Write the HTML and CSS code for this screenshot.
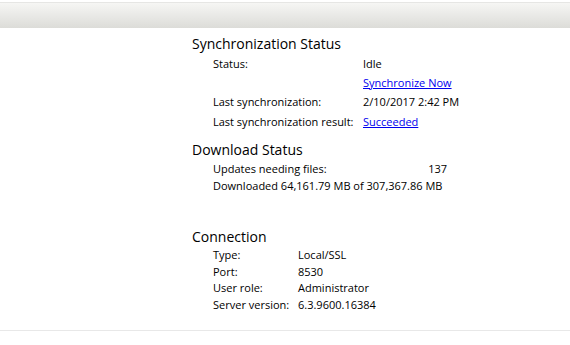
FILE: index.html
```html
<!DOCTYPE html>
<html lang="en">
<head>
    <meta charset="UTF-8">
    <title>Server Status</title>
    <link rel="stylesheet" href="styles.css">
</head>
<body>

    <div class="top-bar"></div>

    <div class="content">

        <div class="section">
            <div class="section-title">Synchronization Status</div>
            <div class="grid sync-grid">
                <span>Status:</span><span>Idle</span>
                <span></span><a href="#" class="link">Synchronize Now</a>
                <span>Last synchronization:</span><span>2/10/2017 2:42 PM</span>
                <span>Last synchronization result:</span><a href="#" class="link">Succeeded</a>
            </div>
        </div>

        <div class="section">
            <div class="section-title">Download Status</div>
            <div class="download">
                <div class="download-row"><span>Updates needing files:</span><span>137</span></div>
                <div>Downloaded 64,161.79 MB of 307,367.86 MB</div>
            </div>
        </div>

        <div class="section connection">
            <div class="section-title">Connection</div>
            <div class="grid conn-grid">
                <span>Type:</span><span>Local/SSL</span>
                <span>Port:</span><span>8530</span>
                <span>User role:</span><span>Administrator</span>
                <span>Server version:</span><span>6.3.9600.16384</span>
            </div>
        </div>

    </div>

    <div class="bottom-line"></div>

</body>
</html>
```

FILE: styles.css
```css
body {
    margin: 0;
    background-color: #ffffff;
    font-family: "Open Sans", "Noto Sans", sans-serif;
    font-size: 11px;
    color: #000000;
}

.top-bar {
    margin-top: 2px;
    height: 25px;
    border-top: 1px solid #e6e6e4;
    background: linear-gradient(to bottom, #f6f6f4, #dcdcd8);
}

.content {
    padding: 6px 0 0 192px;
    height: 299px;
    box-sizing: border-box;
}

.section {
    margin-bottom: 7px;
}

.connection {
    margin-top: 33px;
}

.section-title {
    font-size: 14px;
    line-height: 20px;
}

.grid {
    display: grid;
    padding-left: 21px;
}

.sync-grid {
    margin-top: 1.5px;
    grid-template-columns: 150px auto;
    grid-auto-rows: 19.4px;
}

.conn-grid {
    grid-template-columns: 85px auto;
    grid-auto-rows: 16.6px;
}

.link {
    color: #0000ee;
    text-decoration: underline;
}

.download {
    padding-left: 21px;
    line-height: 17px;
}

.download-row {
    display: flex;
    justify-content: space-between;
    width: 234px;
}

.bottom-line {
    border-top: 1px solid #e8e8e8;
    margin-top: 3px;
}
```
